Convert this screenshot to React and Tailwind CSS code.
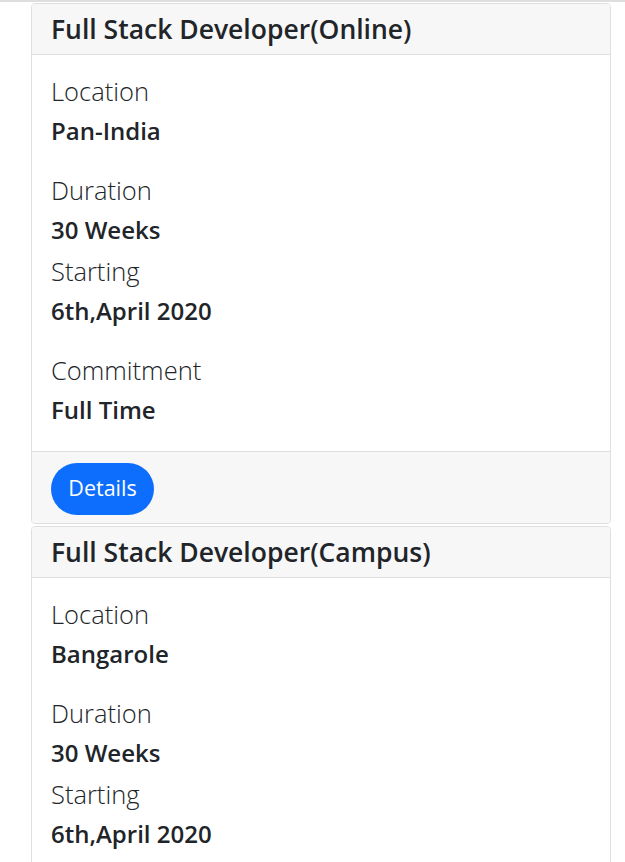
const courses = [
  {
    title: 'Full Stack Developer(Online)',
    location: 'Pan-India',
    duration: '30 Weeks',
    starting: '6th,April 2020',
    commitment: 'Full Time',
  },
  {
    title: 'Full Stack Developer(Campus)',
    location: 'Bangarole',
    duration: '30 Weeks',
    starting: '6th,April 2020',
    commitment: 'Full Time',
  },
];

function Label({ children, className = '' }) {
  return (
    <p className={`text-[25.5px] font-light leading-[31px] text-[#212529] ${className}`}>{children}</p>
  );
}

function Value({ children }) {
  return <p className="text-[24px] font-semibold leading-[31px] text-[#212529] mt-[8px]">{children}</p>;
}

export default function App() {
  return (
    <div className="min-h-screen bg-white" style={{ fontFamily: '"Open Sans", sans-serif' }}>
      <div className="h-[2px] bg-[#dedede]" />
      <div className="flex flex-col gap-[2px] pt-px">
        {courses.map((c) => (
          <div
            key={c.title}
            className="ml-[31px] mr-[14px] border border-[#dfdfdf] rounded-[4px] bg-white overflow-hidden"
          >
            <div className="bg-[#f7f7f7] border-b border-[#dfdfdf] px-[19px] h-[51px] flex items-center">
              <h4 className="text-[26.5px] font-semibold text-[#212529] leading-none">{c.title}</h4>
            </div>
            <div className="px-[19px] pt-[21px] pb-[26px]">
              <Label>Location</Label>
              <Value>{c.location}</Value>
              <Label className="mt-[29px]">Duration</Label>
              <Value>{c.duration}</Value>
              <Label className="mt-[11px]">Starting</Label>
              <Value>{c.starting}</Value>
              <Label className="mt-[29px]">Commitment</Label>
              <Value>{c.commitment}</Value>
            </div>
            <div className="bg-[#f7f7f7] border-t border-[#dfdfdf] px-[19px] h-[72px] flex items-center">
              <button className="bg-[#0d6efd] text-white text-[21.5px] rounded-full w-[103px] h-[52px] mt-[2px]">
                Details
              </button>
            </div>
          </div>
        ))}
      </div>
    </div>
  );
}
